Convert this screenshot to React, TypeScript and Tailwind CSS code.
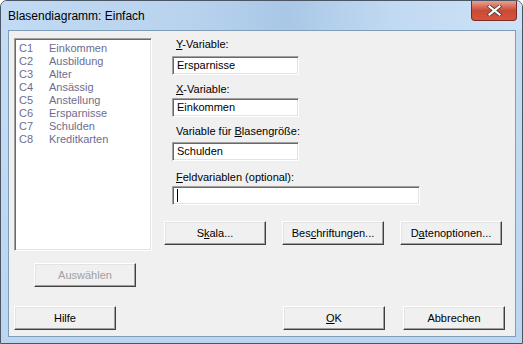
const COLUMNS = [
  ["C1", "Einkommen"],
  ["C2", "Ausbildung"],
  ["C3", "Alter"],
  ["C4", "Ansässig"],
  ["C5", "Anstellung"],
  ["C6", "Ersparnisse"],
  ["C7", "Schulden"],
  ["C8", "Kreditkarten"],
];

const btn =
  "h-[24px] w-[102px] flex items-center justify-center bg-[#f0f0f0] border border-t-[#fff] border-l-[#fff] border-r-[#404040] border-b-[#404040] shadow-[inset_-1px_-1px_#a0a0a0,inset_1px_1px_#e3e3e3]";

const sunken =
  "bg-white border border-t-[#a0a0a0] border-l-[#a0a0a0] border-r-[#fff] border-b-[#fff] shadow-[inset_1px_1px_#696969,inset_-1px_-1px_#e3e3e3]";

function Field({
  label,
  value,
  w = "w-[127px]",
  mt = "mt-0",
  gap = "mt-[5px]",
}: {
  label: React.ReactNode;
  value?: string;
  w?: string;
  mt?: string;
  gap?: string;
}) {
  return (
    <div className={`flex flex-col ${mt}`}>
      <div className="h-[13px] leading-[13px] ml-[4px]">{label}</div>
      <div className={`${sunken} ${w} ${gap} h-[19px] px-[4px] flex items-center`}>
        {value ? <span>{value}</span> : <span className="w-px h-[13px] bg-black" />}
      </div>
    </div>
  );
}

export default function App() {
  return (
    <div
      className="w-[523px] h-[344px] bg-gradient-to-b from-[#c5dcf3] to-[#bcd6f0] rounded-t-[7px] border border-[#4a5664] flex flex-col overflow-hidden"
      style={{ fontFamily: '"Liberation Sans", Arial, sans-serif' }}
    >
      <div className="h-[29px] flex items-start shrink-0 bg-[linear-gradient(90deg,#c2daf3_0%,#b9d3ee_35%,#a9c8e6_55%,#c1d9f2_75%,#cde2f6_100%)]">
        <div className="ml-[7px] mt-[8px] text-[12px] leading-[15px] text-black">
          Blasendiagramm: Einfach
        </div>
        <div className="ml-auto mr-[5px] w-[46px] h-[20px] rounded-b-[4px] border border-t-0 border-[#7a2a22] bg-gradient-to-b from-[#e8a091] via-[#c94a35] to-[#d7533b] flex items-center justify-center">
          <svg width="15" height="11" viewBox="0 0 15 11">
            <path d="M2.5 1.5 L12.5 9.5 M12.5 1.5 L2.5 9.5" stroke="#3b3b3b" strokeWidth="3.6" strokeLinecap="square" />
            <path d="M2.5 1.5 L12.5 9.5 M12.5 1.5 L2.5 9.5" stroke="#ffffff" strokeWidth="2.2" strokeLinecap="square" />
          </svg>
        </div>
      </div>

      <div className="ml-[7px] mr-[6px] mb-[6px] flex-1 bg-[#f0f0f0] border border-[#7f9db9] text-[11px] leading-[13px] text-black flex flex-col pl-[5px]">
        <div className="flex">
          <div className="flex flex-col">
            <div className={`${sunken} mt-[7px] w-[138px] h-[213px] pt-[3px] pl-[4px]`}>
              {COLUMNS.map(([c, n]) => (
                <div key={c} className="flex h-[13px] text-[#6d6d8f]">
                  <span className="w-[30px]">{c}</span>
                  <span>{n}</span>
                </div>
              ))}
            </div>
            <div className={`${btn} ml-[20px] mt-[12px] text-[#a0a0a0]`}>Auswählen</div>
          </div>

          <div className="flex flex-col ml-[12px]">
            <div className="ml-[8px] mt-[7px] flex flex-col">
              <Field label={<><u>Y</u>-Variable:</>} value="Ersparnisse" />
              <Field label={<><u>X</u>-Variable:</>} value="Einkommen" mt="mt-[8px]" gap="mt-[2px]" />
              <Field label={<>Variable für <u>B</u>lasengröße:</>} value="Schulden" mt="mt-[8px]" gap="mt-[4px]" />
              <Field label={<><u>F</u>eldvariablen (optional):</>} w="w-[248px]" mt="mt-[10px]" gap="mt-[2px]" />
            </div>
            <div className="flex gap-[16px] mt-[16px] text-black">
              <div className={btn}>S<u>k</u>ala...</div>
              <div className={btn}>Bes<u>c</u>hriftungen...</div>
              <div className={btn}>D<u>a</u>tenoptionen...</div>
            </div>
          </div>
        </div>

        <div className="flex mt-[19px] text-black">
          <div className={btn}>Hilfe</div>
          <div className={`${btn} ml-auto`}><u>O</u>K</div>
          <div className={`${btn} ml-[18px] mr-[10px]`}>Abbrechen</div>
        </div>
      </div>
    </div>
  );
}
